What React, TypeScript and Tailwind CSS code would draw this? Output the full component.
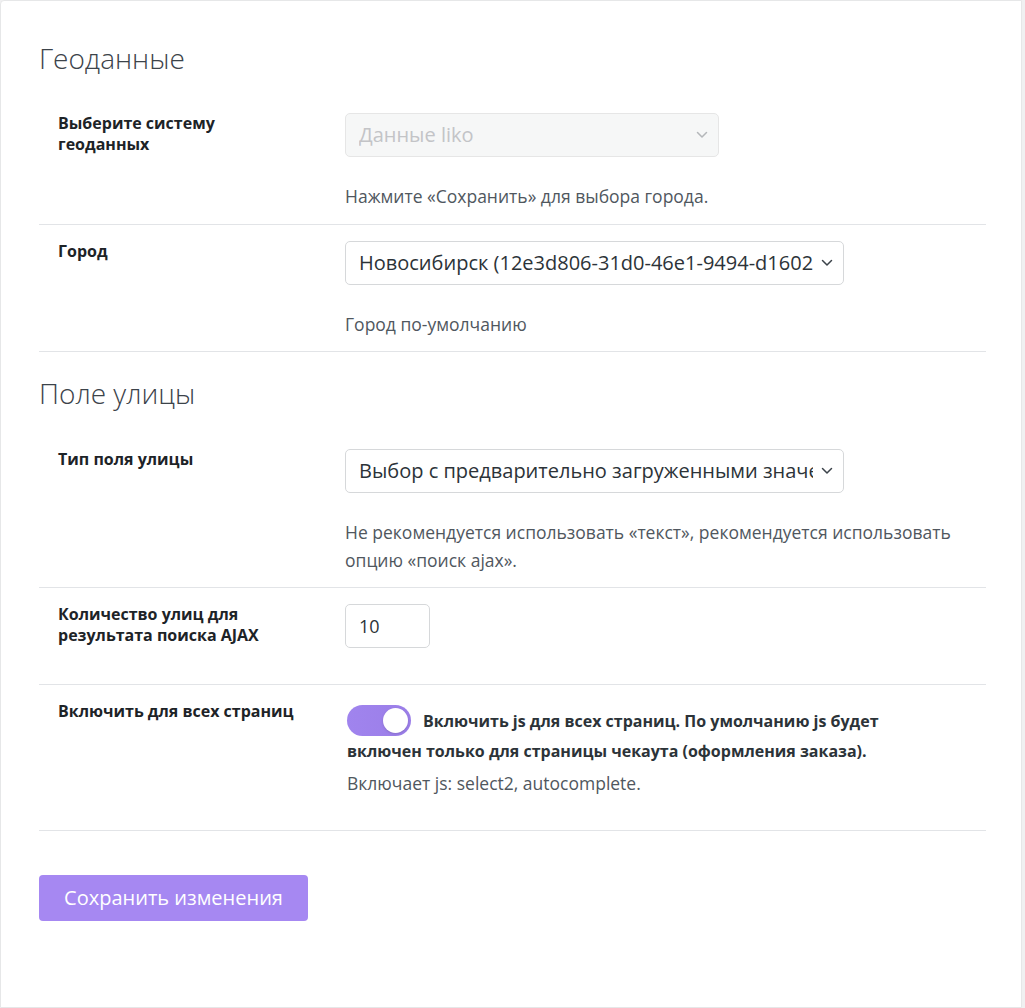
import { useState } from "react"

const font = { fontFamily: '"Open Sans", "Noto Sans", sans-serif' }

function Chevron({ muted }: { muted?: boolean }) {
  return (
    <svg width="12" height="8" viewBox="0 0 12 8" fill="none" className="shrink-0">
      <path
        d="M1.5 1.5 6 6l4.5-4.5"
        stroke={muted ? "#b4b7ba" : "#3c434a"}
        strokeWidth="1.5"
        strokeLinecap="round"
        strokeLinejoin="round"
      />
    </svg>
  )
}

function SelectBox({
  value,
  width,
  disabled,
}: {
  value: string
  width: string
  disabled?: boolean
}) {
  return (
    <div
      className={`flex h-[44px] items-center gap-2 rounded-[5px] border pl-[13px] pr-[10px] text-[20px] ${width} ${
        disabled
          ? "border-[#e6e6e6] bg-[#f6f7f7] text-[#c3c4c7]"
          : "border-[#d6d8da] bg-white text-[#2c3338]"
      }`}
    >
      <span className="min-w-0 flex-1 overflow-hidden whitespace-nowrap">{value}</span>
      <Chevron muted={disabled} />
    </div>
  )
}

function Row({
  label,
  children,
  className = "pt-4 pb-[14px]",
}: {
  label: React.ReactNode
  children: React.ReactNode
  className?: string
}) {
  return (
    <div className={`flex border-b border-[#e2e4e7] ${className}`}>
      <div className="w-[306px] shrink-0 pl-[19px] pr-6 text-[16px] font-bold leading-[21px] text-[#1d2327]">
        {label}
      </div>
      <div className="min-w-0 flex-1 pr-[10px]">{children}</div>
    </div>
  )
}

function Help({ children }: { children: React.ReactNode }) {
  return <p className="mt-[25px] text-[17.5px] leading-[28px] text-[#50575e]">{children}</p>
}

export default function App() {
  const [enabled, setEnabled] = useState(true)
  const [count, setCount] = useState("10")

  return (
    <div className="min-h-[1008px] bg-[#f0f0f1] pr-[3px]" style={font}>
      <div className="min-h-[1008px] rounded-tl-[4px] border border-[#e6e7e8] bg-white pl-[38px] pr-[35px] pt-[40px]">
        <h2 className="text-[28px] font-light leading-[34px] text-[#3c434a]">Геоданные</h2>

        <div className="mt-[22px]">
          <Row label={<>Выберите систему<br />геоданных</>}>
            <SelectBox value="Данные liko" width="w-[374px]" disabled />
            <Help>Нажмите «Сохранить» для выбора города.</Help>
          </Row>
          <Row label="Город" className="pt-4 pb-[13px]">
            <SelectBox
              value="Новосибирск (12e3d806-31d0-46e1-9494-d1602d4fd0a8)"
              width="w-[499px]"
            />
            <Help>Город по-умолчанию</Help>
          </Row>
        </div>

        <h2 className="mt-[24px] text-[28px] font-light leading-[34px] text-[#3c434a]">Поле улицы</h2>

        <div className="mt-[23px]">
          <Row label="Тип поля улицы" className="pt-4 pb-[13px]">
            <SelectBox
              value="Выбор с предварительно загруженными значениями"
              width="w-[499px]"
            />
            <Help>
              Не рекомендуется использовать «текст», рекомендуется использовать опцию «поиск ajax».
            </Help>
          </Row>
          <Row label={<>Количество улиц для<br />результата поиска AJAX</>} className="pt-4 pb-9">
            <input
              value={count}
              onChange={(e) => setCount(e.target.value)}
              className="h-[44px] w-[85px] rounded-[5px] border border-[#d6d8da] px-[13px] text-[18px] text-[#2c3338] outline-none"
            />
          </Row>
          <Row label="Включить для всех страниц" className="pt-[16px] pb-[33px]">
            <p className="mt-[4px] pl-[2px] pr-[22px] text-[16px] font-bold leading-[30px] text-[#2c3338]">
              <button
                type="button"
                onClick={() => setEnabled(!enabled)}
                className={`relative mr-3 inline-block h-[31px] w-[64px] rounded-full align-[-9px] transition-colors ${
                  enabled ? "bg-gradient-to-r from-[#a084ee] to-[#9b7ee8]" : "bg-[#c3c4c7]"
                }`}
              >
                <span
                  className={`absolute top-[3px] h-[25px] w-[25px] rounded-full bg-white shadow-sm transition-all ${
                    enabled ? "left-[36px]" : "left-[3px]"
                  }`}
                />
              </button>
              Включить js для всех страниц. По умолчанию js будет включен только для страницы чекаута (оформления заказа).
            </p>
            <p className="mt-[3px] pl-[2px] text-[17.5px] leading-[28px] text-[#50575e]">
              Включает js: select2, autocomplete.
            </p>
          </Row>
        </div>

        <button
          type="button"
          className="mt-[44px] h-[46px] w-[269px] rounded-[4px] bg-[#a688f2] text-[20px] text-white"
        >
          Сохранить изменения
        </button>
      </div>
    </div>
  )
}
